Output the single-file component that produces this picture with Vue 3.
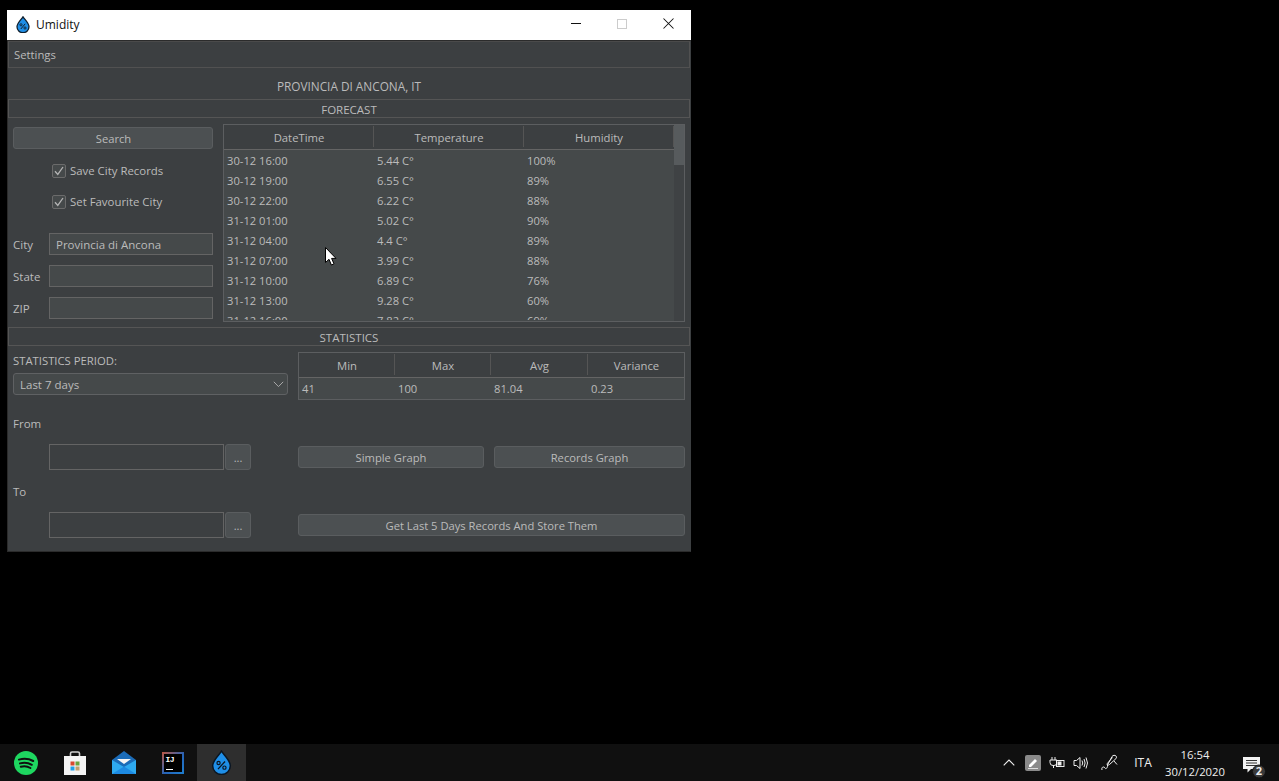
<script setup>
const rows = [
  ['30-12 16:00', '5.44 C°', '100%'],
  ['30-12 19:00', '6.55 C°', '89%'],
  ['30-12 22:00', '6.22 C°', '88%'],
  ['31-12 01:00', '5.02 C°', '90%'],
  ['31-12 04:00', '4.4 C°', '89%'],
  ['31-12 07:00', '3.99 C°', '88%'],
  ['31-12 10:00', '6.89 C°', '76%'],
  ['31-12 13:00', '9.28 C°', '60%'],
  ['31-12 16:00', '7.82 C°', '69%'],
]
const fields = [
  { label: 'City', value: 'Provincia di Ancona' },
  { label: 'State', value: '' },
  { label: 'ZIP', value: '' },
]
const stats = [
  { head: 'Min', value: '41' },
  { head: 'Max', value: '100' },
  { head: 'Avg', value: '81.04' },
  { head: 'Variance', value: '0.23' },
]
</script>

<template>
  <div class="desktop">
    <div class="window">
      <div class="titlebar">
        <svg class="app-icon" width="14" height="17" viewBox="0 0 14 17">
          <path d="M7 .8C5.6 3.2 1 7 1 10.7A6 6 0 0 0 13 10.7C13 7 8.4 3.2 7 .8Z" fill="#1f8fe8" stroke="#10202e" stroke-width="1.3" />
          <path d="M4.8 13 9.2 7.8" stroke="#10202e" stroke-width="1" />
          <circle cx="5" cy="8.8" r="1.1" fill="none" stroke="#10202e" stroke-width=".9" />
          <circle cx="9" cy="12" r="1.1" fill="none" stroke="#10202e" stroke-width=".9" />
        </svg>
        <span class="title">Umidity</span>
        <div class="caption">
          <span class="cap-btn"><svg width="10" height="10" viewBox="0 0 10 10"><path d="M0 4.5H10" stroke="#111" /></svg></span>
          <span class="cap-btn"><svg width="10" height="10" viewBox="0 0 10 10"><rect x=".5" y=".5" width="9" height="9" fill="none" stroke="#ccc" /></svg></span>
          <span class="cap-btn"><svg width="11" height="11" viewBox="0 0 11 11"><path d="M.5.5 10.5 10.5M10.5.5.5 10.5" stroke="#111" stroke-width="1.05" /></svg></span>
        </div>
      </div>

      <div class="body">
        <div class="menubar">Settings</div>
        <div class="location">PROVINCIA DI ANCONA, IT</div>
        <div class="section-bar">FORECAST</div>

        <section class="forecast">
          <div class="form-col">
            <button class="btn search">Search</button>
            <label class="check first"><span class="box"><svg width="10" height="10" viewBox="0 0 10 10"><path d="M1 5.2 3.8 8.4 9 1" fill="none" stroke="#b4b4b4" stroke-width="1.3" /></svg></span>Save City Records</label>
            <label class="check"><span class="box"><svg width="10" height="10" viewBox="0 0 10 10"><path d="M1 5.2 3.8 8.4 9 1" fill="none" stroke="#b4b4b4" stroke-width="1.3" /></svg></span>Set Favourite City</label>
            <div class="fields">
              <div v-for="f in fields" :key="f.label" class="field">
                <span class="field-label">{{ f.label }}</span>
                <div class="input">{{ f.value }}</div>
              </div>
            </div>
          </div>

          <div class="table forecast-table">
            <div class="table-main">
              <div class="thead cols3">
                <div class="th">DateTime</div>
                <div class="th">Temperature</div>
                <div class="th">Humidity</div>
              </div>
              <div class="tbody">
                <div v-for="r in rows" :key="r[0]" class="tr cols3">
                  <div v-for="(c, i) in r" :key="i" class="td">{{ c }}</div>
                </div>
              </div>
            </div>
            <div class="scrollbar"><div class="thumb"></div></div>
          </div>
        </section>

        <div class="section-bar">STATISTICS</div>

        <section class="statistics">
          <div class="stats-top">
            <div class="period">
              <div class="period-label">STATISTICS PERIOD:</div>
              <div class="combo">
                <span>Last 7 days</span>
                <svg width="11" height="7" viewBox="0 0 11 7"><path d="M.8.8 5.5 5.6 10.2.8" fill="none" stroke="#a8a8a8" /></svg>
              </div>
            </div>
            <div class="table stats-table">
              <div class="thead cols4">
                <div v-for="s in stats" :key="s.head" class="th">{{ s.head }}</div>
              </div>
              <div class="stat-row cols4">
                <div v-for="s in stats" :key="s.head" class="td">{{ s.value }}</div>
              </div>
            </div>
          </div>

          <div class="range-label">From</div>
          <div class="date-row">
            <div class="date-pick">
              <div class="input date-input"></div>
              <button class="btn dots">...</button>
            </div>
            <div class="actions">
              <button class="btn simple">Simple Graph</button>
              <button class="btn records">Records Graph</button>
            </div>
          </div>

          <div class="range-label to">To</div>
          <div class="date-row">
            <div class="date-pick">
              <div class="input date-input"></div>
              <button class="btn dots">...</button>
            </div>
            <div class="actions">
              <button class="btn wide">Get Last 5 Days Records And Store Them</button>
            </div>
          </div>
        </section>
      </div>
    </div>

    <svg class="cursor" width="12" height="19" viewBox="0 0 12 19">
      <path d="M.5.5V15.5L4 12.3 6.4 18 9 16.9 6.6 11.4H11Z" fill="#fff" stroke="#000" />
    </svg>

    <footer class="taskbar">
      <div class="task-icons">
        <div class="task">
          <svg width="24" height="24" viewBox="0 0 24 24">
            <circle cx="12" cy="12" r="12" fill="#1ed760" />
            <path d="M5 8.6C9.5 7.3 15 7.7 19.2 10M6 12.4C9.8 11.4 14.4 11.8 17.8 13.8M6.8 15.8C10 15 13.6 15.3 16.4 17" fill="none" stroke="#101010" stroke-width="2" stroke-linecap="round" />
          </svg>
        </div>
        <div class="task">
          <svg width="24" height="24" viewBox="0 0 24 24">
            <path d="M7.5 6V2.5A1.5 1.5 0 0 1 9 1H15A1.5 1.5 0 0 1 16.5 2.5V6" fill="none" stroke="#cfcfcf" stroke-width="1.6" />
            <path d="M1 5H23V24H1Z" fill="#f4f4f4" />
            <rect x="7.5" y="10.5" width="4" height="4" fill="#d8492f" />
            <rect x="12.5" y="10.5" width="4" height="4" fill="#6aa33c" />
            <rect x="7.5" y="15.5" width="4" height="4" fill="#22a0e8" />
            <rect x="12.5" y="15.5" width="4" height="4" fill="#c3a06e" />
          </svg>
        </div>
        <div class="task">
          <svg width="24" height="24" viewBox="0 0 24 24">
            <path d="M0 9 12 0 24 9V23H0Z" fill="#1b6cb8" />
            <path d="M5 8H19L12 13Z" fill="#f5f5f5" />
            <path d="M0 9 12 16 24 9V23H0Z" fill="#2eaaf0" />
            <path d="M0 23 12 15.5 24 23Z" fill="#1d8ae2" />
          </svg>
        </div>
        <div class="task">
          <div class="ij"><div class="ij-inner"><span class="ij-text">IJ</span><span class="ij-line"></span></div></div>
        </div>
        <div class="task active">
          <svg width="21" height="25" viewBox="0 0 14 17">
            <path d="M7 .8C5.6 3.2 1 7 1 10.7A6 6 0 0 0 13 10.7C13 7 8.4 3.2 7 .8Z" fill="#1f8fe8" stroke="#0b1622" stroke-width="1" />
            <path d="M4.6 13 9.4 7.8" stroke="#0b1622" stroke-width=".9" />
            <circle cx="5" cy="8.8" r="1.1" fill="none" stroke="#0b1622" stroke-width=".8" />
            <circle cx="9" cy="12" r="1.1" fill="none" stroke="#0b1622" stroke-width=".8" />
          </svg>
        </div>
      </div>

      <div class="tray">
        <div class="tray-item w24"><svg width="12" height="7" viewBox="0 0 12 7"><path d="M.7 6.3 6 1 11.3 6.3" fill="none" stroke="#eee" stroke-width="1.1" /></svg></div>
        <div class="tray-item w24">
          <svg width="16" height="16" viewBox="0 0 16 16">
            <rect width="16" height="16" rx="2" fill="#8a8a8a" />
            <path d="M4 10 10 4 12 6 6 12H4Z" fill="#fff" />
            <path d="M3 13.5H13" stroke="#ddd" />
          </svg>
        </div>
        <div class="tray-item w24">
          <svg width="16" height="12" viewBox="0 0 16 12">
            <path d="M3 0V3M6 0V3M1 3H8V5.5A3 3 0 0 1 5 8.5H4A3 3 0 0 1 1 5.5ZM4.5 8.5V11" fill="none" stroke="#eee" />
            <rect x="7.5" y="3.5" width="7.5" height="6" fill="#111" stroke="#eee" />
            <rect x="8.5" y="4.5" width="4" height="4" fill="#eee" />
          </svg>
        </div>
        <div class="tray-item w24">
          <svg width="16" height="14" viewBox="0 0 16 14">
            <path d="M1 4.5H3.5L7 1.5V12.5L3.5 9.5H1Z" fill="none" stroke="#eee" />
            <path d="M9 4.5Q10.5 7 9 9.5M11 3Q13.2 7 11 11M13 1.5Q16 7 13 12.5" fill="none" stroke="#eee" />
          </svg>
        </div>
        <div class="tray-item w32">
          <svg width="17" height="17" viewBox="0 0 17 17">
            <path d="M1 16C0 13 3 12 4 14C5 16 7 13 6.5 11L11 2.5C12 1 14 1 15 2C16 3 15.5 4.5 14 5.5L8.5 10.5C7 11.7 5.5 11 6.3 9.5L11.5 3.5" fill="none" stroke="#eee" />
            <path d="M13 7 16 10.5" stroke="#eee" />
          </svg>
        </div>
        <div class="tray-item w36 ita">ITA</div>
        <div class="tray-item clock"><span>16:54</span><span>30/12/2020</span></div>
        <div class="tray-item notif">
          <svg width="27" height="31" viewBox="0 0 27 31">
            <path d="M4 10H21V22H12L8.5 25.5V22H4Z" fill="#f2f2f2" />
            <path d="M7 13.5H18M7 16H18M7 18.5H18" stroke="#333" />
            <circle cx="20" cy="24.5" r="6.5" fill="#3a3a3a" stroke="#111" />
          </svg>
          <span class="badge">2</span>
        </div>
      </div>
    </footer>
  </div>
</template>

<style>
html, body { margin: 0; background: #000; overflow: hidden; }
</style>

<style scoped>
* { box-sizing: border-box; }
.desktop {
  position: relative;
  width: 1279px;
  height: 781px;
  background: #000;
  padding-top: 10px;
  display: flex;
  flex-direction: column;
  font-family: "Open Sans", "Noto Sans", sans-serif;
  font-size: 11.5px;
  color: #bbb;
}
.window { width: 684px; height: 542px; margin-left: 7px; display: flex; flex-direction: column; }
.titlebar { height: 30px; background: #fff; display: flex; align-items: center; padding-left: 9px; color: #111; flex: none; }
.app-icon { margin-top: -2px; }
.title { margin-left: 6px; font-size: 12px; margin-top: -1px; }
.caption { margin-left: auto; display: flex; }
.cap-btn { width: 46px; height: 30px; display: flex; align-items: center; justify-content: center; margin-top: -3px; }
.body { flex: 1; min-height: 0; background: #3c3f41; border: 1px solid #2b2b2b; border-right-color: #3c3f41; display: flex; flex-direction: column; }
.menubar { height: 27px; flex: none; border: 1px solid #515151; border-top-color: #4a4a4a; padding-left: 5px; line-height: 25px; font-size: 11.3px; }
.location { height: 31px; flex: none; text-align: center; padding-top: 10px; line-height: 17px; font-size: 11.8px; }
.section-bar { height: 19px; flex: none; text-align: center; line-height: 19px; border: 1px solid #555; font-size: 11.5px; }
.forecast { height: 209px; flex: none; padding: 6px 5px 0; display: flex; gap: 10px; }
.form-col { width: 200px; padding-top: 3px; flex: none; }
.btn { display: block; border: 1px solid #5a5d5f; border-radius: 3px; background: #4c5052; color: #bbb; font: inherit; font-size: 11.2px; padding: 0; height: 22px; line-height: 22px; }
.search { width: 100%; padding-left: 1px; }
.check { display: flex; align-items: center; height: 31px; padding-left: 39px; font-size: 11.4px; }
.check.first { margin-top: 6px; }
.box { width: 14px; height: 14px; border: 1px solid #6b6b6b; border-radius: 2px; background: #45494a; margin-right: 4px; display: flex; align-items: center; justify-content: center; }
.fields { margin-top: 16px; display: flex; flex-direction: column; gap: 10px; }
.field { display: flex; align-items: center; height: 22px; }
.field-label { width: 36px; flex: none; }
.input { flex: 1; height: 22px; border: 1px solid #646464; background: #45494a; padding-left: 6px; line-height: 21px; }
.table { border: 1px solid #5c5e60; background: #45494a; }
.forecast-table { width: 462px; height: 198px; display: flex; }
.table-main { width: 450px; flex: none; }
.thead { height: 25px; background: #3c3f41; border-bottom: 1px solid #646464; }
.th { text-align: center; padding-left: 1px; position: relative; border-right: 1px solid #555; margin: 1px 0 2px; height: 21px; line-height: 23px; font-size: 11.3px; }
.cols3 { display: grid; grid-template-columns: 150px 150px 150px; }
.cols4 { display: grid; grid-template-columns: 96px 96px 97px 96px; }
.tbody { height: 170px; overflow: hidden; padding-top: 1px; }
.tr { height: 20px; }
.td { padding-left: 3px; line-height: 20px; font-size: 11.2px; }
.scrollbar { width: 10px; flex: none; background: #3f4244; }
.thumb { height: 40px; background: #575b5d; }
.statistics { flex: 1; padding: 6px 5px 0; }
.stats-top { display: flex; gap: 10px; }
.period { width: 275px; flex: none; }
.period-label { height: 18px; line-height: 18px; font-size: 11.3px; }
.combo { margin-top: 3px; height: 22px; border: 1px solid #5f6163; border-radius: 3px; background: #45494a; display: flex; align-items: center; justify-content: space-between; padding: 0 3px 0 6px; }
.stats-table { width: 387px; height: 48px; }
.stats-table .th:last-child { border-right: 0; }
.stat-row { height: 21px; }
.stat-row .td { line-height: 21px; }
.range-label { height: 20px; line-height: 20px; margin-top: 14px; }
.range-label.to { margin-top: 12px; }
.date-row { display: flex; align-items: center; gap: 47px; margin-top: 10px; height: 26px; }
.date-pick { width: 202px; margin-left: 36px; flex: none; display: flex; gap: 1px; }
.date-input { height: 26px; width: 175px; flex: none; background: #3c3f41; }
.dots { width: 26px; height: 26px; line-height: 26px; font-size: 11px; flex: none; }
.actions { flex: 1; display: flex; gap: 10px; }
.simple { width: 186px; flex: none; }
.records { flex: 1; }
.wide { width: 100%; }
.cursor { position: absolute; left: 325px; top: 247px; }
.taskbar { position: absolute; left: 0; right: 0; bottom: 0; height: 37px; background: #101010; display: flex; color: #eee; }
.task-icons { display: flex; padding-left: 1px; }
.task { width: 49px; height: 37px; display: flex; align-items: center; justify-content: center; }
.task.active { background: #2e2e2e; }
.ij { width: 22px; height: 22px; padding: 2px; background: linear-gradient(135deg, #c0563f, #2563b8 55%, #1e7fd0); }
.ij-inner { width: 18px; height: 18px; background: #000; position: relative; }
.ij-text { position: absolute; left: 2px; top: 0; font: bold 8px/11px "Liberation Mono", monospace; color: #fff; letter-spacing: -.5px; }
.ij-line { position: absolute; left: 2px; bottom: 2px; width: 7px; height: 1px; background: #fff; }
.tray { margin-left: auto; display: flex; }
.tray-item { height: 37px; display: flex; align-items: center; justify-content: center; flex: none; }
.w24 { width: 24px; }
.w32 { width: 32px; }
.w36 { width: 36px; }
.ita { font-size: 12px; }
.clock { width: 68px; flex-direction: column; font-size: 11.3px; line-height: 17px; padding-top: 1px; }
.notif { width: 50px; padding-right: 3px; position: relative; }
.badge { position: absolute; left: 23px; top: 20px; width: 14px; text-align: center; font-size: 11px; font-weight: 700; line-height: 14px; color: #eee; }
</style>
